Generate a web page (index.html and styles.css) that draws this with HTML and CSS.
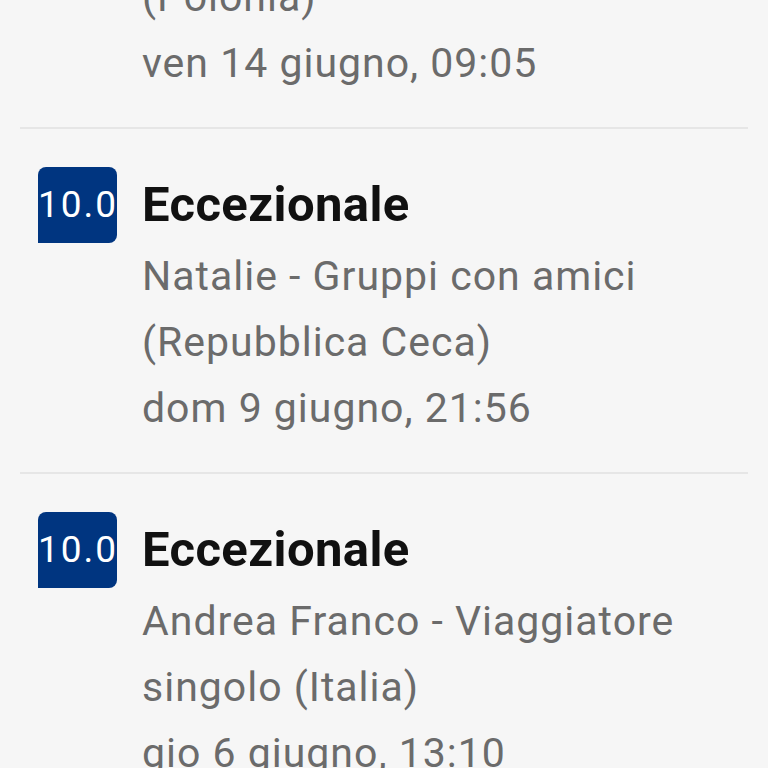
FILE: index.html
```html
<!DOCTYPE html>
<html lang="it">
  <head>
    <meta charset="UTF-8" />
    <meta name="viewport" content="width=device-width, initial-scale=1.0" />
    <title>Recensioni</title>
    <link rel="stylesheet" href="styles.css">
  </head>
  <body>
    <div class="reviews">
      <div class="review review-cut">
        <div class="details">
          <p class="line">(Polonia)</p>
          <p class="line">ven 14 giugno, 09:05</p>
        </div>
      </div>

      <div class="review">
        <div class="score">10.0</div>
        <div class="details">
          <h2 class="title">Eccezionale</h2>
          <p class="line">Natalie - Gruppi con amici</p>
          <p class="line">(Repubblica Ceca)</p>
          <p class="line">dom 9 giugno, 21:56</p>
        </div>
      </div>

      <div class="review">
        <div class="score">10.0</div>
        <div class="details">
          <h2 class="title">Eccezionale</h2>
          <p class="line">Andrea Franco - Viaggiatore singolo (Italia)</p>
          <p class="line">gio 6 giugno, 13:10</p>
        </div>
      </div>
    </div>
  </body>
</html>
```

FILE: styles.css
```css
body {
  margin: 0;
  padding: 0;
  background-color: #f6f6f6;
  font-family: Roboto, "Noto Sans", sans-serif;
  overflow: hidden;
}

.reviews {
  padding: 0 20px;
}

.review {
  display: flex;
  align-items: flex-start;
  gap: 25px;
  padding: 38px 0 31px 18px;
  border-bottom: 2px solid #e6e6e6;
}

.review-cut {
  margin-top: -36px;
  padding-top: 0;
  padding-left: 122px;
}

.score {
  flex: 0 0 79px;
  height: 76px;
  background-color: #003580;
  color: #fff;
  border-radius: 8px 8px 8px 0;
  font-size: 37px;
  line-height: 76px;
  letter-spacing: 2px;
  white-space: nowrap;
  overflow: hidden;
}

.details {
  flex: 1;
  min-width: 0;
}

.title {
  margin: 0;
  font-size: 49px;
  font-weight: 700;
  line-height: 76px;
  letter-spacing: 0.4px;
  color: #111;
}

.line {
  margin: 0;
  font-size: 41px;
  line-height: 66px;
  letter-spacing: 1px;
  color: #6b6b6b;
}
```
